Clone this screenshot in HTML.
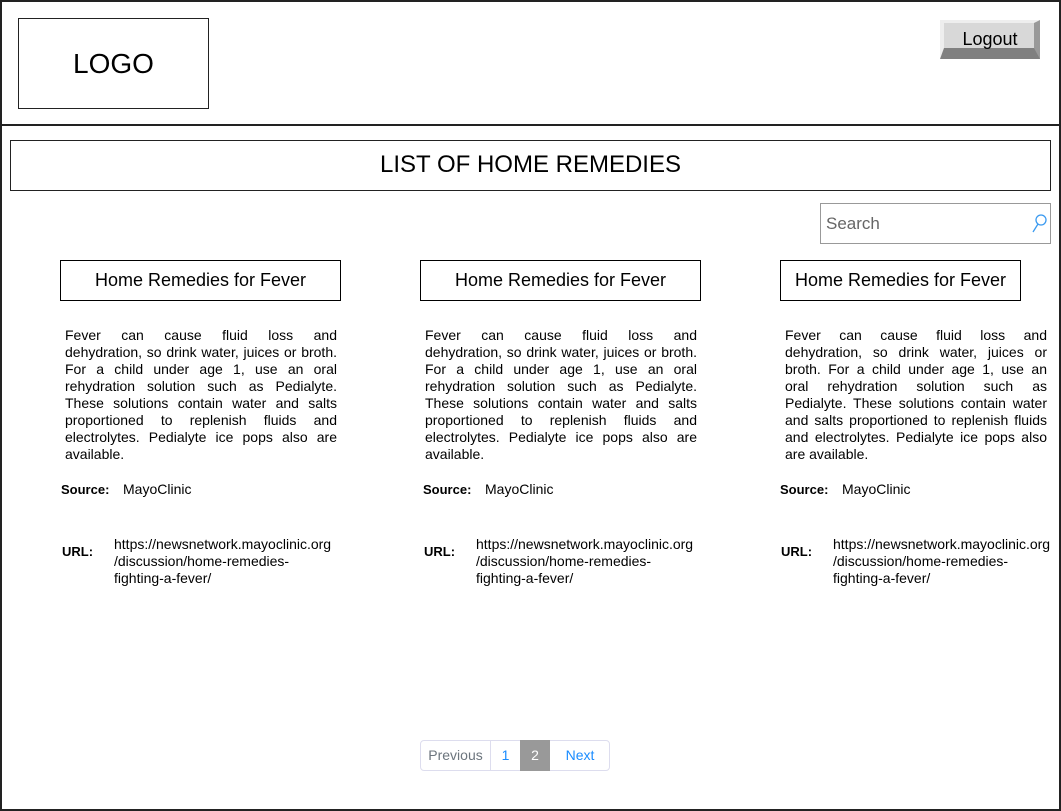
<!DOCTYPE html>
<html><head><style>
body{margin:0;width:1061px;height:811px;position:relative;background:#fff;font-family:"Liberation Sans",sans-serif;overflow:hidden}
.a{position:absolute}
.box{position:absolute;border:1px solid #000;box-sizing:border-box}
.t{position:absolute;font-size:22px;text-align:center}
.card{position:absolute;border:1px solid #000;box-sizing:border-box;height:41px;font-size:18px;text-align:center;line-height:39px}
.p{position:absolute;font-size:14px;line-height:17px}
.p div{text-align:justify;text-align-last:justify;white-space:nowrap;height:17px}
.p div.l{text-align-last:left}
.lbl{position:absolute;font-size:13px;font-weight:bold}
.v{position:absolute;font-size:14px;line-height:17px}
</style></head><body>
<div class="box" style="left:0;top:0;width:1061px;height:811px;border:2px solid #222"></div>
<div class="a" style="left:0;top:124px;width:1061px;height:2px;background:#222"></div>
<div class="box" style="left:18px;top:18px;width:191px;height:91px;border:1.5px solid #222"></div>
<div class="t" style="left:18px;top:48px;width:191px;font-size:28px">LOGO</div>
<div class="a" style="left:940px;top:20px;width:100px;height:39px;background:#d8d8d8"></div>
<div class="a" style="left:940px;top:20px;width:100px;height:39px;box-sizing:border-box;border-style:solid;border-width:3px 6px 11px 4px;border-color:#eee #999 #808080 #eee"></div>
<div class="a" style="left:940px;top:29px;width:100px;text-align:center;font-size:18px">Logout</div>
<div class="box" style="left:10px;top:140px;width:1041px;height:51px;border:1.5px solid #222"></div>
<div class="t" style="left:10px;top:151px;width:1041px;font-size:24px">LIST OF HOME REMEDIES</div>
<div class="box" style="left:820px;top:203px;width:231px;height:41px;border-color:#999"></div>
<div class="a" style="left:826px;top:214px;font-size:17px;color:#666">Search</div>
<svg class="a" style="left:1030px;top:214px" width="18" height="20"><circle cx="11" cy="6" r="5" fill="none" stroke="#3a9af0" stroke-width="1.3"/><line x1="8" y1="10" x2="3" y2="18" stroke="#3a9af0" stroke-width="1.3"/></svg>

<div class="card" style="left:60px;top:260px;width:281px">Home Remedies for Fever</div>
<div class="card" style="left:420px;top:260px;width:281px">Home Remedies for Fever</div>
<div class="card" style="left:780px;top:260px;width:241px">Home Remedies for Fever</div>

<div class="p" style="left:65px;top:327px;width:272px">
<div>Fever can cause fluid loss and</div><div>dehydration, so drink water, juices or broth.</div><div>For a child under age 1, use an oral</div><div>rehydration solution such as Pedialyte.</div><div>These solutions contain water and salts</div><div>proportioned to replenish fluids and</div><div>electrolytes. Pedialyte ice pops also are</div><div class="l">available.</div></div>
<div class="p" style="left:425px;top:327px;width:272px">
<div>Fever can cause fluid loss and</div><div>dehydration, so drink water, juices or broth.</div><div>For a child under age 1, use an oral</div><div>rehydration solution such as Pedialyte.</div><div>These solutions contain water and salts</div><div>proportioned to replenish fluids and</div><div>electrolytes. Pedialyte ice pops also are</div><div class="l">available.</div></div>
<div class="p" style="left:785px;top:327px;width:262px">
<div>Fever can cause fluid loss and</div><div>dehydration, so drink water, juices or</div><div>broth. For a child under age 1, use an</div><div>oral rehydration solution such as</div><div>Pedialyte. These solutions contain water</div><div>and salts proportioned to replenish fluids</div><div>and electrolytes. Pedialyte ice pops also</div><div class="l">are available.</div></div>

<div class="lbl" style="left:61px;top:482px">Source:</div><div class="v" style="left:123px;top:481px">MayoClinic</div>
<div class="lbl" style="left:423px;top:482px">Source:</div><div class="v" style="left:485px;top:481px">MayoClinic</div>
<div class="lbl" style="left:780px;top:482px">Source:</div><div class="v" style="left:842px;top:481px">MayoClinic</div>

<div class="lbl" style="left:62px;top:544px">URL:</div><div class="v" style="left:114px;top:536px">https://newsnetwork.mayoclinic.org<br>/discussion/home-remedies-<br>fighting-a-fever/</div>
<div class="lbl" style="left:424px;top:544px">URL:</div><div class="v" style="left:476px;top:536px">https://newsnetwork.mayoclinic.org<br>/discussion/home-remedies-<br>fighting-a-fever/</div>
<div class="lbl" style="left:781px;top:544px">URL:</div><div class="v" style="left:833px;top:536px">https://newsnetwork.mayoclinic.org<br>/discussion/home-remedies-<br>fighting-a-fever/</div>

<div class="a" style="left:420px;top:740px;width:190px;height:31px;border:1px solid #dde;border-radius:4px;box-sizing:border-box"></div>
<div class="a" style="left:420px;top:740px;width:71px;height:31px;line-height:31px;text-align:center;font-size:14px;color:#6c757d">Previous</div>
<div class="a" style="left:490px;top:741px;width:1px;height:29px;background:#dde"></div>
<div class="a" style="left:491px;top:740px;width:29px;height:31px;line-height:31px;text-align:center;font-size:14px;color:#1a8cff">1</div>
<div class="a" style="left:520px;top:740px;width:30px;height:31px;line-height:31px;text-align:center;font-size:14px;color:#fff;background:#999">2</div>
<div class="a" style="left:550px;top:740px;width:60px;height:31px;line-height:31px;text-align:center;font-size:14px;color:#1a8cff">Next</div>
</body></html>
